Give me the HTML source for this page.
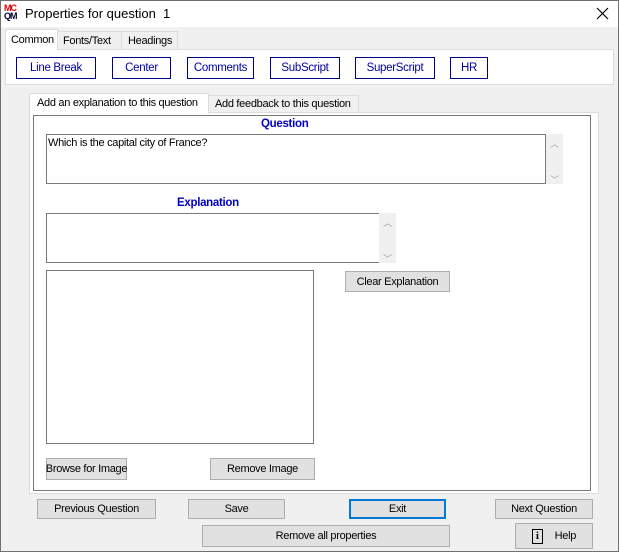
<!DOCTYPE html>
<html><head><style>
*{box-sizing:border-box;margin:0;padding:0}
body{width:619px;height:552px;overflow:hidden;background:#f0f0f0;font-family:"Liberation Sans",sans-serif;font-size:11px;letter-spacing:-0.3px;color:#000;position:relative;white-space:nowrap}
.a{position:absolute}
.win{left:0;top:0;width:619px;height:552px;border:1px solid #707070;border-top:none}
.title{left:0;top:0;width:619px;height:27px;background:#fff;border:1px solid #707070;border-bottom:none}
.btn{position:absolute;background:#e1e1e1;border:1px solid #adadad;text-align:center;font-size:11px;display:flex;align-items:center;justify-content:center}
.bb{position:absolute;background:#fff;border:1px solid #00008b;color:#0000a0;display:flex;align-items:center;justify-content:center;font-size:11.5px}
.tb{position:absolute;background:#fff;border:1px solid #7a7a7a}
.sb{position:absolute;background:#f0f0f0;color:#a0a0a0;font-size:9px;text-align:center}
.lbl{position:absolute;color:#0000c8;font-weight:bold;font-size:11.5px}
</style></head><body>
<div class="a title"></div>
<div class="a win"></div>
<div class="a" style="left:4px;top:4px;font-size:9px;line-height:8px;font-weight:bold;letter-spacing:-1px"><span style="color:#d00">MC</span><br><span style="color:#003">QM</span></div>
<div class="a" style="left:25px;top:6px;font-size:13px;letter-spacing:0">Properties for question&nbsp; 1</div>
<svg class="a" style="left:596px;top:7px" width="13" height="13"><path d="M1 1L12 12M12 1L1 12" stroke="#000" stroke-width="1.2"/></svg>

<div class="a" style="left:5px;top:49px;width:609px;height:36px;background:#fff;border:1px solid #dcdcdc"></div>
<div class="a" style="left:5px;top:29px;width:53px;height:21px;background:#fff;border:1px solid #dcdcdc;border-bottom:none;padding:4px 0 0 5px">Common</div>
<div class="a" style="left:57px;top:31px;width:65px;height:18px;background:#f0f0f0;border:1px solid #dcdcdc;border-bottom:none;padding:3px 0 0 5px">Fonts/Text</div>
<div class="a" style="left:121px;top:31px;width:57px;height:18px;background:#f0f0f0;border:1px solid #dcdcdc;border-bottom:none;padding:3px 0 0 6px">Headings</div>
<div class="bb" style="left:16px;top:57px;width:80px;height:22px">Line Break</div>
<div class="bb" style="left:112px;top:57px;width:59px;height:22px">Center</div>
<div class="bb" style="left:187px;top:57px;width:67px;height:22px">Comments</div>
<div class="bb" style="left:270px;top:57px;width:70px;height:22px">SubScript</div>
<div class="bb" style="left:355px;top:57px;width:80px;height:22px">SuperScript</div>
<div class="bb" style="left:450px;top:57px;width:38px;height:22px">HR</div>

<div class="a" style="left:29px;top:112px;width:570px;height:382px;background:#fff;border:1px solid #dcdcdc"></div>
<div class="a" style="left:29px;top:93px;width:180px;height:21px;background:#fff;border:1px solid #dcdcdc;border-bottom:none;padding:3px 0 0 7px">Add an explanation to this question</div>
<div class="a" style="left:208px;top:95px;width:151px;height:17px;background:#f0f0f0;border:1px solid #dcdcdc;border-bottom:none;padding:2px 0 0 6px">Add feedback to this question</div>
<div class="a" style="left:33px;top:115px;width:558px;height:376px;border:1px solid #7a7a7a"></div>

<div class="lbl" style="left:261px;top:118px">Question</div>
<div class="tb" style="left:46px;top:134px;width:500px;height:50px;padding:2px 1px">Which is the capital city of France?</div>
<div class="sb" style="left:546px;top:134px;width:17px;height:50px"><div style="margin-top:3px">︿</div><div style="margin-top:23px">﹀</div></div>
<div class="lbl" style="left:177px;top:197px">Explanation</div>
<div class="tb" style="left:46px;top:213px;width:334px;height:50px"></div>
<div class="sb" style="left:379px;top:213px;width:17px;height:50px"><div style="margin-top:3px">︿</div><div style="margin-top:23px">﹀</div></div>
<div class="tb" style="left:46px;top:270px;width:268px;height:174px"></div>
<div class="btn" style="left:345px;top:271px;width:105px;height:21px">Clear Explanation</div>
<div class="btn" style="left:46px;top:458px;width:81px;height:22px">Browse for Image</div>
<div class="btn" style="left:210px;top:458px;width:105px;height:22px">Remove Image</div>

<div class="btn" style="left:37px;top:499px;width:119px;height:20px">Previous Question</div>
<div class="btn" style="left:188px;top:499px;width:97px;height:20px">Save</div>
<div class="btn" style="left:349px;top:499px;width:97px;height:20px;border:2px solid #0078d7">Exit</div>
<div class="btn" style="left:495px;top:499px;width:98px;height:20px">Next Question</div>
<div class="btn" style="left:202px;top:525px;width:248px;height:22px">Remove all properties</div>
<div class="btn" style="left:515px;top:523px;width:78px;height:26px"><span style="border:1px solid #000;font-family:'Liberation Serif',serif;font-weight:bold;font-size:11px;padding:0 3px;margin-right:12px;line-height:13px">i</span>Help</div>
</body></html>
